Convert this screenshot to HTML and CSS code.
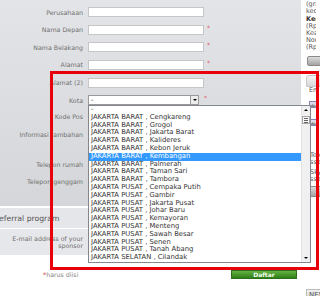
FILE: index.html
```html
<!DOCTYPE html>
<html lang="id">
<head>
    <meta charset="UTF-8">
    <meta name="viewport" content="width=device-width, initial-scale=1.0">
    <title>Daftar</title>
    <link rel="stylesheet" href="styles.css">
</head>
<body>
    <div class="page">
        <div class="main">
            <div class="form-panel">
                <div class="row"><label class="lbl">Perusahaan</label><input class="field" type="text"></div>
                <div class="row"><label class="lbl">Nama Depan</label><input class="field" type="text"><span class="req">*</span></div>
                <div class="row"><label class="lbl">Nama Belakang</label><input class="field" type="text"><span class="req">*</span></div>
                <div class="row"><label class="lbl">Alamat</label><input class="field" type="text"><span class="req">*</span></div>
                <div class="row"><label class="lbl">Alamat (2)</label><input class="field" type="text"></div>
                <div class="row">
                    <label class="lbl">Kota</label>
                    <div class="select"><span>-</span><span class="select-btn"></span></div>
                    <span class="req req-sel">*</span>
                </div>
                <div class="row row-pos"><label class="lbl">Kode Pos</label><input class="field" type="text"><span class="req">*</span></div>
                <div class="row row-info"><label class="lbl">Informasi tambahan</label><input class="field" type="text"></div>
                <div class="row row-tel"><label class="lbl">Telepon rumah</label><input class="field" type="text"></div>
                <div class="row"><label class="lbl">Telepon genggam</label><input class="field" type="text"></div>
            </div>

            <div class="section-head"><span>Referral program</span></div>
            <div class="section-body">
                <div class="row row-sponsor"><label class="lbl">E-mail address of your sponsor</label><input class="field" type="text"></div>
            </div>

            <div class="form-foot">
                <span class="req-note"><span class="star">*</span>harus diisi</span>
                <button class="btn-daftar">Daftar</button>
            </div>
        </div>

        <div class="sidebar">
            <div class="side-note clip">
                <div>(gratis ongkos kirim)</div>
                <div>kecuali luar kota</div>
            </div>
            <div class="side-info clip">
                <div class="side-title">Keuntungan member</div>
                <div>(Rp 0,-)</div>
                <div>Keanggotaan gratis</div>
                <div>Nomor member</div>
                <div>(Rp 0,-)</div>
            </div>
            <div class="side-btn"></div>
            <div class="side-tab"></div>
            <div class="side-line clip">Email</div>
            <div class="side-icon">
                <svg width="8" height="7" viewBox="0 0 8 7"><rect x="0.5" y="0.5" width="7" height="6" fill="#dcdce6" stroke="#8484b8"/><path d="M1 6 L3.5 3 L5 4.5 L6 3.5 L7 6 Z" fill="#8a8a8a"/></svg>
            </div>
            <div class="side-icon side-icon2">
                <svg width="8" height="7" viewBox="0 0 8 7"><rect x="0.5" y="0.5" width="7" height="6" fill="#dcdce6" stroke="#8484b8"/><path d="M1 6 L3.5 3 L5 4.5 L6 3.5 L7 6 Z" fill="#8a8a8a"/></svg>
            </div>
            <div class="side-block clip">
                <div>Telepon</div>
                <div>ssetiap hari</div>
            </div>
            <div class="side-block side-block2 clip">
                <div>Skype</div>
                <div>sservice</div>
            </div>
            <div class="side-btn side-btn2"></div>
            <div class="side-news">NEWS</div>
            <div class="side-inf">INFO</div>
        </div>
    </div>

    <div class="city-list">
        <div class="city-options">
            <div>-</div>
            <div>JAKARTA BARAT , Cengkareng</div>
            <div>JAKARTA BARAT , Grogol</div>
            <div>JAKARTA BARAT , Jakarta Barat</div>
            <div>JAKARTA BARAT , Kalideres</div>
            <div>JAKARTA BARAT , Kebon Jeruk</div>
            <div class="selected">JAKARTA BARAT , Kembangan</div>
            <div>JAKARTA BARAT , Palmerah</div>
            <div>JAKARTA BARAT , Taman Sari</div>
            <div>JAKARTA BARAT , Tambora</div>
            <div>JAKARTA PUSAT , Cempaka Putih</div>
            <div>JAKARTA PUSAT , Gambir</div>
            <div>JAKARTA PUSAT , Jakarta Pusat</div>
            <div>JAKARTA PUSAT , Johar Baru</div>
            <div>JAKARTA PUSAT , Kemayoran</div>
            <div>JAKARTA PUSAT , Menteng</div>
            <div>JAKARTA PUSAT , Sawah Besar</div>
            <div>JAKARTA PUSAT , Senen</div>
            <div>JAKARTA PUSAT , Tanah Abang</div>
            <div>JAKARTA SELATAN , Cilandak</div>
        </div>
        <div class="scrollbar">
            <div class="sb-btn sb-up"></div>
            <div class="sb-thumb"></div>
            <div class="sb-track"></div>
            <div class="sb-btn sb-down"></div>
        </div>
    </div>

    <div class="highlight-box"></div>
</body>
</html>
```

FILE: styles.css
```css
html, body {
    margin: 0;
    padding: 0;
}
body {
    width: 320px;
    height: 296px;
    overflow: hidden;
    position: relative;
    background: #fff;
    font-family: "DejaVu Sans", Verdana, sans-serif;
}
.page {
    display: flex;
    align-items: flex-start;
}
.main {
    width: 301px;
    flex-shrink: 0;
}
.form-panel {
    height: 206px;
    box-sizing: border-box;
    padding-top: 3.5px;
    background: linear-gradient(to bottom, #e3e4e7, #d5d6d9);
}
.row {
    display: flex;
    align-items: center;
    height: 17.6px;
}
.lbl {
    width: 83px;
    margin-right: 5px;
    flex-shrink: 0;
    text-align: right;
    font-size: 6.3px;
    line-height: 7.5px;
    color: #707070;
}
.field {
    width: 116px;
    height: 10px;
    box-sizing: border-box;
    margin: 0;
    padding: 0;
    border: 1px solid #c6c6c6;
    background: #fff;
    font-size: 6px;
}
.req {
    align-self: flex-start;
    margin: 3.5px 0 0 3px;
    font-size: 6px;
    line-height: 6px;
    color: #e04848;
}
.req-sel {
    margin-left: 5px;
}
.select {
    width: 111px;
    height: 10px;
    box-sizing: border-box;
    border: 1px solid #9a9a9a;
    background: #fff;
    display: flex;
    align-items: center;
    justify-content: space-between;
    padding-left: 2px;
    font-size: 6.8px;
    color: #333;
}
.select-btn {
    width: 8px;
    height: 8px;
    box-sizing: border-box;
    border-left: 1px solid #9a9a9a;
    background: #ececec;
    display: flex;
    align-items: center;
    justify-content: center;
}
.select-btn::after {
    content: '';
    border-left: 2px solid transparent;
    border-right: 2px solid transparent;
    border-top: 2px solid #000;
}
.row-pos {
    height: 15px;
}
.row-info {
    height: 21px;
}
.row-tel {
    margin-top: 10.6px;
}
.section-head {
    margin-top: 2px;
    height: 20px;
    background: #e5e6e9;
    display: flex;
    align-items: center;
    font-size: 7.7px;
    color: #555;
}
.section-head span {
    margin-left: -6px;
}
.section-body {
    margin-top: 1px;
    height: 26px;
    background: #e6e7ea;
    display: flex;
    align-items: center;
}
.row-sponsor {
    height: auto;
}
.form-foot {
    display: flex;
    align-items: center;
    margin-top: 15px;
    height: 9px;
}
.req-note {
    margin-left: 43px;
    font-size: 6.3px;
    color: #888;
}
.req-note .star {
    color: #e04848;
}
.btn-daftar {
    margin-left: auto;
    margin-right: 4px;
    width: 66px;
    height: 9px;
    padding: 0;
    border: 1px solid #2f6e1a;
    background: linear-gradient(to bottom, #66b243, #2e7f17);
    color: #f4fff0;
    font-family: inherit;
    font-weight: bold;
    font-size: 6px;
    line-height: 7px;
}

/* right column, mostly cut off by the window */
.sidebar {
    margin-left: 5px;
    width: 80px;
    flex-shrink: 0;
    font-size: 6.5px;
    color: #555;
    white-space: nowrap;
}
.clip {
    width: 10px;
    overflow: hidden;
}
.side-note {
    padding-top: 1px;
    line-height: 6.5px;
}
.side-info {
    margin-top: 1.5px;
    line-height: 7px;
}
.side-title {
    font-weight: bold;
    color: #333;
}
.side-btn {
    margin: 5.5px 0 0 1px;
    height: 10px;
    box-sizing: border-box;
    border: 1px solid #8a8a8a;
    border-radius: 2px;
    background: linear-gradient(to bottom, #dcdcdc, #a4a4a4);
}
.side-tab {
    margin-top: 9px;
    height: 12px;
    box-sizing: border-box;
    border: 1px solid #c8c8c8;
    border-radius: 3px 0 0 0;
    background: linear-gradient(to bottom, #f4f4f4, #d8d8d8);
}
.side-line {
    padding-left: 3px;
    line-height: 7px;
}
.side-icon {
    margin: 7px 0 0 3px;
    height: 7px;
    display: flex;
}
.side-icon2 {
    margin-top: 11px;
}
.side-block {
    margin-top: 26px;
    padding-left: 4px;
    line-height: 7px;
}
.side-block2 {
    margin-top: 3px;
}
.side-btn2 {
    margin-top: 3px;
    height: 11px;
}
.side-news {
    margin-top: 92px;
    height: 13px;
    box-sizing: border-box;
    border: 1px solid #bbb;
    background: linear-gradient(to bottom, #f0f0f0, #d2d2d2);
    padding-left: 2px;
    font-size: 7px;
    line-height: 11px;
    color: #555;
}
.side-inf {
    padding-left: 2px;
    font-size: 6px;
    line-height: 7px;
    font-weight: bold;
    letter-spacing: 1px;
    color: #e02020;
}

/* open dropdown of the Kota select */
.city-list {
    position: absolute;
    left: 88px;
    top: 105px;
    width: 223px;
    height: 158px;
    box-sizing: border-box;
    border: 1px solid #828790;
    background: #fff;
    display: flex;
}
.city-options {
    flex: 1;
    overflow: hidden;
    font-size: 6.8px;
    line-height: 7.8px;
    color: #333;
}
.city-options div {
    padding-left: 2px;
    white-space: nowrap;
}
.city-options .selected {
    background: #3399ff;
    color: #fff;
}
.scrollbar {
    width: 9px;
    background: #f0f0f0;
    border-left: 1px solid #e2e2e2;
    box-sizing: border-box;
    display: flex;
    flex-direction: column;
}
.sb-btn {
    height: 8px;
    display: flex;
    align-items: center;
    justify-content: center;
}
.sb-up::after {
    content: '';
    border-left: 2px solid transparent;
    border-right: 2px solid transparent;
    border-bottom: 2px solid #000;
}
.sb-down::after {
    content: '';
    border-left: 2px solid transparent;
    border-right: 2px solid transparent;
    border-top: 2px solid #000;
}
.sb-thumb {
    margin-top: 2px;
    height: 8px;
    box-sizing: border-box;
    border: 1px solid #a8a8a8;
    background: #f6f6f6;
    display: flex;
    align-items: center;
    justify-content: center;
}
.sb-thumb::after {
    content: '';
    width: 4px;
    height: 1px;
    background: #666;
    box-shadow: 0 2px 0 #666, 0 -2px 0 #666;
}
.sb-track {
    flex: 1;
}

.highlight-box {
    position: absolute;
    left: 50px;
    top: 71px;
    width: 269px;
    height: 199px;
    box-sizing: border-box;
    border: 3px solid #e8000b;
}
```
